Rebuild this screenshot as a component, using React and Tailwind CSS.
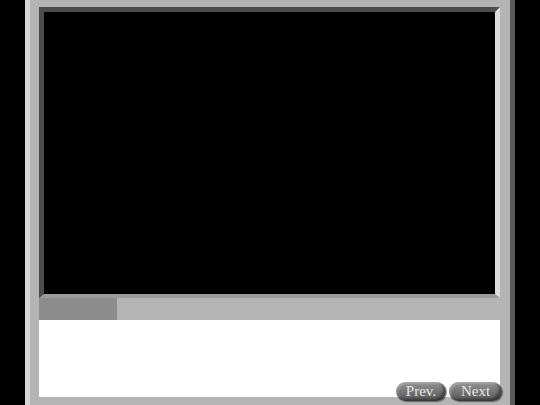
export default function App() {
  const btn =
    "h-[19px] rounded-full flex items-center justify-center text-[15px] leading-none text-[#e6e6e6] bg-gradient-to-b from-[#949494] via-[#757575] to-[#565656] shadow-[inset_-3px_-2px_3px_rgba(0,0,0,0.4),inset_2px_2px_2px_rgba(255,255,255,0.2),1px_1px_1px_rgba(0,0,0,0.45)]";
  return (
    <div className="w-[540px] h-[405px] bg-black flex justify-center overflow-hidden" style={{ fontFamily: '"Liberation Serif", serif' }}>
      <div className="w-[490px] h-[405px] bg-[#b4b4b4] border-l-[5px] border-l-[#d6d6d6] border-r-[5px] border-r-[#5a5a5a] pl-[9px] pr-[10px] pt-[7px] flex flex-col">
        <div className="h-[291px] bg-black border-t-[5px] border-l-[5px] border-r-[5px] border-b-[4px] border-t-[#4c4c4c] border-l-[#4c4c4c] border-r-[#dcdcdc] border-b-[#9a9a9a]" />
        <div className="h-[22px] flex">
          <div className="w-[78px] bg-[#8c8c8c]" />
        </div>
        <div className="relative h-[77px] bg-white">
          <div className="absolute right-[-2px] bottom-[-4px] flex gap-[3px]">
            <button className={btn + " w-[50px] pb-[1px]"}>Prev.</button>
            <button className={btn + " w-[53px] pb-[1px]"}>Next</button>
          </div>
        </div>
      </div>
    </div>
  );
}
